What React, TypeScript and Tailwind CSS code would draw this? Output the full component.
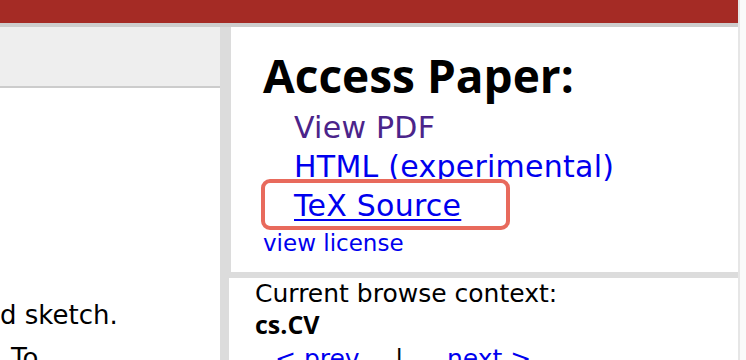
import React from 'react';

const sans = "font-['DejaVu_Sans',sans-serif]";
const bold = "font-['Open_Sans',sans-serif] font-bold";

const App: React.FC = () => {
  return (
    <div className={`flex h-[360px] w-[746px] overflow-hidden bg-white ${sans}`}>
      <div className="flex w-[738px] flex-col">
        {/* Header bar */}
        <div className="h-[23px] shrink-0 border-b-[4px] border-[#cdcdcd] bg-[#a52b25] box-content" />

        <div className="flex flex-1">
          {/* Left column (abstract) */}
          <div className="w-[220px] shrink-0 overflow-hidden">
            <div className="h-[59px] border-b-2 border-[#cccccc] bg-[#eeeeee] box-content" />
            <div className="mt-[206px] text-[26px] leading-[43px] text-black whitespace-nowrap">
              <div>d sketch.</div>
              <div className="pl-[11px]">To</div>
            </div>
          </div>

          {/* Gutter */}
          <div className="w-[11px] shrink-0 bg-[#dcdcdc]" />

          {/* Right column */}
          <div className="flex flex-1 flex-col bg-[#dcdcdc]">
            {/* Access Paper box */}
            <div className="h-[245px] bg-white pl-[32px] pt-[25px]">
              <h2 className={`${bold} text-[46px] leading-none text-black`}>Access Paper:</h2>
              <ul className="mt-[10px] pl-[31px] text-[30px] leading-[39px] tracking-[0.25px]">
                <li>
                  <a href="#" className="text-[#4b248a] no-underline">View PDF</a>
                </li>
                <li>
                  <a href="#" className="text-[#0000ee] no-underline">HTML (experimental)</a>
                </li>
                <li className="relative">
                  <span className="pointer-events-none absolute left-[-33px] top-[-7px] h-[51px] w-[249px] rounded-[9px] border-[4px] border-[#e86a5c]" />
                  <a href="#" className="text-[#0000ee] underline decoration-2 underline-offset-[3px]">TeX Source</a>
                </li>
              </ul>
              <div className="mt-[3px] text-[23px] leading-[30px]">
                <a href="#" className="text-[#0000ee]">view license</a>
              </div>
            </div>

            {/* Browse context box */}
            <div className="ml-[-2px] mt-[6px] flex-1 bg-white pl-[26px] pt-[1px] text-[25px] leading-[30px]">
              <div className="text-black">Current browse context:</div>
              <div className={`${bold} text-black`}>cs.CV</div>
              <div className="mt-[5px] flex whitespace-nowrap">
                <a href="#" className="ml-[20px] w-[120px] text-[#0000ee]">&lt; prev</a>
                <span className="w-[52px] text-black">|</span>
                <a href="#" className="text-[#0000ee]">next &gt;</a>
              </div>
            </div>
          </div>
        </div>
      </div>

      {/* Scrollbar track */}
      <div className="flex-1 border-l-2 border-[#e6e6e6] bg-[#fafafa]" />
    </div>
  );
};

export default App;
